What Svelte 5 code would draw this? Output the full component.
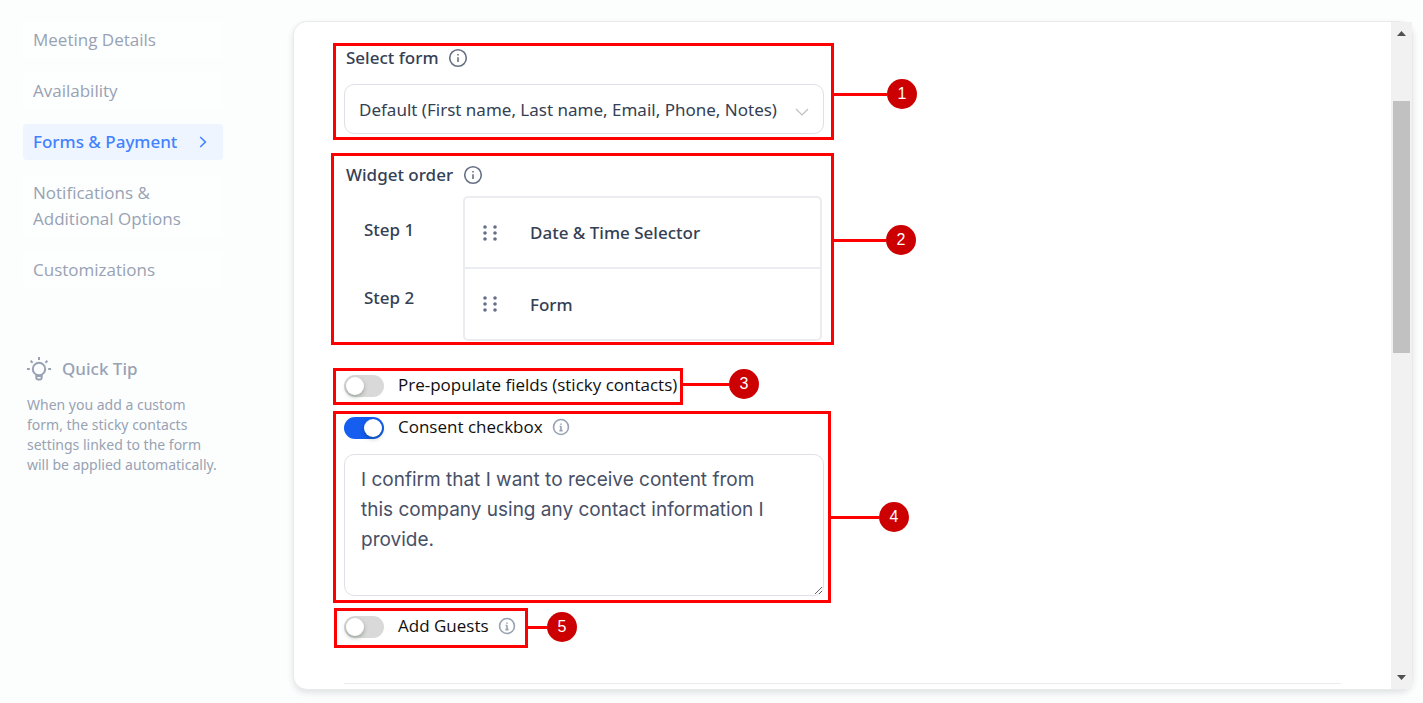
<script>
    const navItems = [
        { label: 'Meeting Details' },
        { label: 'Availability' },
        { label: 'Forms & Payment', active: true },
        { label: 'Notifications & Additional Options' },
        { label: 'Customizations' }
    ];

    const steps = ['Date & Time Selector', 'Form'];

    let stickyContacts = $state(false);
    let consent = $state(true);
    let addGuests = $state(false);
    let consentText = $state('I confirm that I want to receive content from this company using any contact information I provide.');
</script>

{#snippet infoIcon(muted)}
    <svg class="info" class:muted viewBox="0 0 20 20" aria-hidden="true">
        <circle cx="10" cy="10" r="8.3" />
        <path d="M10 9.2v4.8" />
        <path d="M10 6v1.6" />
        {#if muted}
            <path d="M8.5 9.4H10M8.2 14h3.6" />
        {/if}
    </svg>
{/snippet}

<!-- numbered marker joined to the right edge of a highlighted block -->
{#snippet callout(number, top, length)}
    <div class="callout" style="top: {top}px">
        <span class="line" style="width: {length}px"></span>
        <span class="badge">{number}</span>
    </div>
{/snippet}

<div class="page">
    <aside class="sidebar">
        <nav>
            {#each navItems as item}
                <a href="#settings" class:active={item.active}>
                    <span>{item.label}</span>
                    {#if item.active}
                        <svg class="arrow" viewBox="0 0 8 12" aria-hidden="true"><path d="M1.2 1l5.2 5-5.2 5" /></svg>
                    {/if}
                </a>
            {/each}
        </nav>

        <div class="tip">
            <h2>
                <svg class="bulb" viewBox="0 0 24 24" aria-hidden="true">
                    <circle cx="12" cy="12" r="6.2" />
                    <path d="M9.3 17.5v3.2a1.8 1.8 0 0 0 1.8 1.8h1.8a1.8 1.8 0 0 0 1.8-1.8v-3.2M9.3 19h5.4" />
                    <path d="M12 0v3M0 12h2.8M21.2 12H24M3.6 3.8l2 2M20.4 3.8l-2 2" />
                </svg>
                Quick Tip
            </h2>
            <p>When you add a custom form, the sticky contacts settings linked to the form will be applied automatically.</p>
        </div>
    </aside>

    <main class="card">
        <div class="content">
            <section class="block select-block">
                <label class="title" for="form-select">Select form {@render infoIcon(false)}</label>
                <div class="select">
                    <select id="form-select">
                        <option>Default (First name, Last name, Email, Phone, Notes)</option>
                    </select>
                    <svg class="chevron" viewBox="0 0 14 8" aria-hidden="true"><path d="M1 1l6 6 6-6" /></svg>
                </div>
                {@render callout(1, 33, 54)}
            </section>

            <section class="block order-block">
                <h3 class="title">Widget order {@render infoIcon(false)}</h3>
                <div class="order">
                    <div class="step-names">
                        {#each steps as _, i}
                            <span>Step {i + 1}</span>
                        {/each}
                    </div>
                    <ul>
                        {#each steps as step}
                            <li>
                                <svg class="grip" viewBox="0 0 14 16" aria-hidden="true">
                                    {#each [2, 8, 14] as y}
                                        <circle cx="2" cy={y} r="1.8" />
                                        <circle cx="12" cy={y} r="1.8" />
                                    {/each}
                                </svg>
                                {step}
                            </li>
                        {/each}
                    </ul>
                </div>
                {@render callout(2, 69, 53)}
            </section>

            <section class="block switch-block">
                <label class="switch">
                    <input type="checkbox" bind:checked={stickyContacts} />
                    <span>Pre-populate fields (sticky contacts)</span>
                </label>
                {@render callout(3, -2, 47)}
            </section>

            <section class="block consent-block">
                <label class="switch">
                    <input type="checkbox" bind:checked={consent} />
                    <span>Consent checkbox</span>
                    {@render infoIcon(true)}
                </label>
                <textarea aria-label="Consent text" bind:value={consentText}></textarea>
                {@render callout(4, 88, 49)}
            </section>

            <section class="block guests-block">
                <label class="switch">
                    <input type="checkbox" bind:checked={addGuests} />
                    <span>Add Guests</span>
                    {@render infoIcon(true)}
                </label>
                {@render callout(5, 1, 20)}
            </section>

            <hr />
        </div>

        <div class="scrollbar" aria-hidden="true">
            <svg viewBox="0 0 9 5"><path d="M4.5 0L9 5H0z" /></svg>
            <div class="track">
                <div class="thumb"></div>
            </div>
            <svg viewBox="0 0 9 5"><path d="M0 0h9L4.5 5z" /></svg>
        </div>
    </main>
</div>

<style>
    :global(body) {
        background: #fcfefe;
        font-family: "Open Sans", "Noto Sans", sans-serif;
        font-size: 17px;
        color: #344054;
    }

    * {
        box-sizing: border-box;
    }

    .page {
        display: grid;
        grid-template-columns: 200px 1fr;
        gap: 70px;
        min-height: 100vh;
        padding: 21px 10px 13px 23px;
    }

    nav {
        display: flex;
        flex-direction: column;
        gap: 15px;
        padding-top: 1px;
    }

    nav a {
        display: flex;
        align-items: center;
        justify-content: space-between;
        padding: 5px 16px 5px 10px;
        border-radius: 4px;
        background: #fdfefe;
        color: #98a2b3;
        line-height: 26px;
        text-decoration: none;
    }

    nav a.active {
        background: #eff5ff;
        color: #4382ff;
        font-weight: 500;
    }

    nav a.active,
    .tip,
    .title,
    .order,
    .select select {
        font-family: "Noto Sans", "Open Sans", sans-serif;
    }

    .arrow {
        width: 8px;
        height: 12px;
        fill: none;
        stroke: #4382ff;
        stroke-width: 1.6;
    }

    .tip {
        margin-top: 68px;
        padding-left: 4px;
        color: #98a2b3;
    }

    .tip h2 {
        display: flex;
        align-items: center;
        gap: 11px;
        margin: 0;
        font-size: 17px;
        font-weight: 500;
        line-height: 26px;
    }

    .bulb {
        width: 24px;
        height: 24px;
        fill: none;
        stroke: #98a2b3;
        stroke-width: 2;
    }

    .tip p {
        margin: 13px 0 0;
        font-size: 14px;
        line-height: 20px;
    }

    .card {
        display: flex;
        border: 1px solid #e9ebeb;
        border-radius: 14px;
        background: #fff;
        box-shadow: 0 3px 6px rgba(16, 24, 40, 0.12);
    }

    .content {
        flex: 1;
        display: flex;
        flex-direction: column;
        align-items: flex-start;
        padding: 21px 50px 5px 39px;
    }

    .block {
        position: relative;
        border: 3px solid #f00;
    }

    .title {
        display: flex;
        align-items: center;
        gap: 10px;
        margin: 0;
        padding-left: 2px;
        font-size: 17px;
        font-weight: 500;
        line-height: 24px;
    }

    .info {
        width: 20px;
        height: 20px;
        fill: none;
        stroke: #667085;
        stroke-width: 1.6;
    }

    .info.muted {
        width: 18px;
        height: 18px;
        stroke: #98a2b3;
        stroke-width: 1.8;
    }

    .callout {
        position: absolute;
        left: calc(100% + 2px);
        display: flex;
        align-items: center;
    }

    .line {
        height: 3px;
        background: #f00;
    }

    .badge {
        width: 30px;
        border-radius: 50%;
        background: #c00;
        color: #fff;
        font-family: "Liberation Sans", Arial, sans-serif;
        font-size: 16px;
        line-height: 30px;
        text-align: center;
    }

    .select-block {
        width: 501px;
        padding: 0 7px 3px 8px;
    }

    .select {
        position: relative;
        margin-top: 14px;
    }

    .select select {
        width: 100%;
        height: 50px;
        padding: 0 36px 0 14px;
        border: 1px solid #dfe1e6;
        border-radius: 10px;
        appearance: none;
        background: #fff;
        color: #344054;
        font-size: 17px;
    }

    .chevron {
        position: absolute;
        right: 15px;
        top: 24px;
        width: 14px;
        height: 8px;
        fill: none;
        stroke: #bfbfbf;
        stroke-width: 1.2;
        pointer-events: none;
    }

    .order-block {
        width: 503px;
        margin: 13px 0 0 -2px;
        padding: 7px 9px 1px 10px;
    }

    .order {
        display: flex;
        justify-content: space-between;
        margin-top: 9px;
        font-weight: 500;
    }

    .step-names {
        display: flex;
        flex-direction: column;
        padding-left: 20px;
        line-height: 68px;
    }

    .order ul {
        width: 359px;
        margin: 0;
        padding: 0;
        border: 2px solid #eaecf0;
        border-radius: 5px;
        list-style: none;
    }

    .order li {
        display: flex;
        align-items: center;
        gap: 33px;
        height: 69px;
        padding-left: 18px;
    }

    .order li + li {
        height: 72px;
        border-top: 2px solid #eaecf0;
    }

    .grip {
        width: 14px;
        height: 16px;
        fill: #667085;
    }

    .switch-block {
        width: 350px;
        margin-top: 23px;
        padding: 1px 8px 4px;
    }

    .switch {
        display: flex;
        align-items: center;
        color: #101010;
        line-height: 26px;
        white-space: nowrap;
    }

    .switch span {
        margin: 0 9px 0 14px;
    }

    .switch input {
        flex: none;
        width: 40px;
        height: 22px;
        margin: 2px 0 0;
        padding: 2px;
        border-radius: 11px;
        appearance: none;
        background: #d9d9d9;
    }

    .switch input::before {
        content: '';
        display: block;
        width: 18px;
        height: 18px;
        border-radius: 50%;
        background: #fff;
        box-shadow: 0 2px 4px rgba(0, 35, 11, 0.3);
    }

    .switch input:checked {
        background: #155eef;
    }

    .switch input:checked::before {
        margin-left: 18px;
    }

    .consent-block {
        width: 498px;
        margin-top: 6px;
        padding: 0 4px 4px 8px;
    }

    textarea {
        display: block;
        width: 480px;
        height: 142px;
        margin-top: 14px;
        padding: 10px 48px 9px 16px;
        border: 1px solid #dfe1e6;
        border-radius: 10px;
        color: #475067;
        font-family: Inter, sans-serif;
        font-size: 19px;
        line-height: 30px;
    }

    .guests-block {
        width: 194px;
        margin: 5px 0 0 1px;
        padding: 2px 7px 6px;
    }

    hr {
        align-self: stretch;
        margin: 35px 0 0 11px;
        border: 0;
        border-top: 1px solid #eaebed;
    }

    .scrollbar {
        display: flex;
        flex-direction: column;
        align-items: center;
        justify-content: space-between;
        width: 21px;
        padding: 9px 0;
        background: #f1f1f1;
    }

    .scrollbar svg {
        width: 9px;
        height: 5px;
        fill: #505050;
    }

    .track {
        flex: 1;
        align-self: stretch;
        padding: 0 2px;
        margin: 5px 0;
    }

    .thumb {
        height: 40%;
        margin-top: 60px;
        background: #c1c1c1;
    }
</style>
